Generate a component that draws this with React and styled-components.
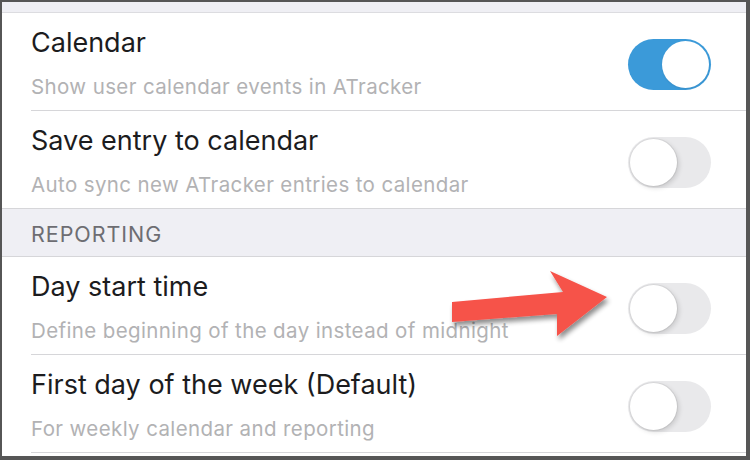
import React from "react";
import styled, { createGlobalStyle } from "styled-components";

const Global = createGlobalStyle`
  html, body { margin: 0; padding: 0; background: #565656; }
  body { width: 750px; height: 460px; overflow: hidden; }
  #root { width: 750px; height: 460px; }
`;

const Frame = styled.div`
  box-sizing: border-box;
  width: 750px;
  height: 460px;
  padding: 2px 4px 4px 2px;
  background: #565656;
`;

const Screen = styled.div`
  position: relative;
  height: 100%;
  background: #ffffff;
  overflow: hidden;
  font-family: Inter, "Noto Sans", sans-serif;
  display: flex;
  flex-direction: column;
`;

const TopBand = styled.div`
  height: 10px;
  background: #efeff4;
  border-bottom: 1px solid #dcdce0;
`;

const Row = styled.div`
  display: flex;
  padding-left: 29px;
  background: #fff;
`;

const RowInner = styled.div`
  flex: 1;
  height: 97px;
  display: flex;
  align-items: center;
  padding-right: 35px;
  border-bottom: ${(p) => (p.$last ? "none" : "1px solid #d6d6d9")};
`;

const TextCol = styled.div`
  flex: 1;
  display: flex;
  flex-direction: column;
  gap: 14px;
  margin-top: 2px;
`;

const Title = styled.div`
  font-size: 27px;
  line-height: 34px;
  color: #1c1c1e;
  letter-spacing: 0;
`;

const Subtitle = styled.div`
  font-size: 20.5px;
  line-height: 26px;
  color: #b2b2b4;
  letter-spacing: 0.38px;
`;

const Track = styled.div`
  position: relative;
  width: 83px;
  height: 51px;
  border-radius: 26px;
  margin-top: 6px;
  background: ${(p) => (p.$on ? "#3b9ad9" : "#e9e9eb")};
  flex-shrink: 0;
`;

const Knob = styled.div`
  position: absolute;
  top: 2px;
  left: ${(p) => (p.$on ? "34px" : "2px")};
  width: 47px;
  height: 47px;
  border-radius: 50%;
  background: #fff;
  box-shadow: ${(p) =>
    p.$on
      ? "0 1px 2px rgba(0,0,0,0.08)"
      : "0 0 0 1px rgba(0,0,0,0.06), 2px 2px 5px rgba(0,0,0,0.14)"};
`;

const SectionHeader = styled.div`
  box-sizing: border-box;
  height: 49px;
  background: #efeff4;
  border-top: 1px solid #d6d6d9;
  border-bottom: 1px solid #d6d6d9;
  display: flex;
  align-items: center;
  padding-left: 29px;
  padding-top: 3px;
  font-size: 21.5px;
  color: #6d6d72;
  letter-spacing: 0.95px;
`;

const ArrowLayer = styled.svg`
  position: absolute;
  left: 0;
  top: 0;
  pointer-events: none;
`;

const Toggle = ({ on }) => (
  <Track $on={on}>
    <Knob $on={on} />
  </Track>
);

const SettingRow = ({ title, subtitle, on, last }) => (
  <Row>
    <RowInner $last={last}>
      <TextCol>
        <Title>{title}</Title>
        <Subtitle>{subtitle}</Subtitle>
      </TextCol>
      <Toggle on={on} />
    </RowInner>
  </Row>
);

export default function App() {
  return (
    <>
      <Global />
      <Frame>
        <Screen>
          <TopBand />
          <SettingRow
            title="Calendar"
            subtitle="Show user calendar events in ATracker"
            on
          />
          <SettingRow
            title="Save entry to calendar"
            subtitle="Auto sync new ATracker entries to calendar"
            last
          />
          <SectionHeader>REPORTING</SectionHeader>
          <SettingRow
            title="Day start time"
            subtitle="Define beginning of the day instead of midnight"
          />
          <SettingRow
            title="First day of the week (Default)"
            subtitle="For weekly calendar and reporting"
          />
          <ArrowLayer width="744" height="454" viewBox="2 2 744 454">
            <defs>
              <filter id="sh" x="-20%" y="-30%" width="140%" height="170%">
                <feGaussianBlur in="SourceAlpha" stdDeviation="2.5" />
                <feOffset dx="2" dy="4" result="b" />
                <feComponentTransfer>
                  <feFuncA type="linear" slope="0.45" />
                </feComponentTransfer>
                <feMerge>
                  <feMergeNode />
                  <feMergeNode in="SourceGraphic" />
                </feMerge>
              </filter>
            </defs>
            <polygon
              points="452,302 563,292 550,271 607,297 557,336 557,314 452,322"
              fill="#f6524a"
              filter="url(#sh)"
            />
          </ArrowLayer>
        </Screen>
      </Frame>
    </>
  );
}
